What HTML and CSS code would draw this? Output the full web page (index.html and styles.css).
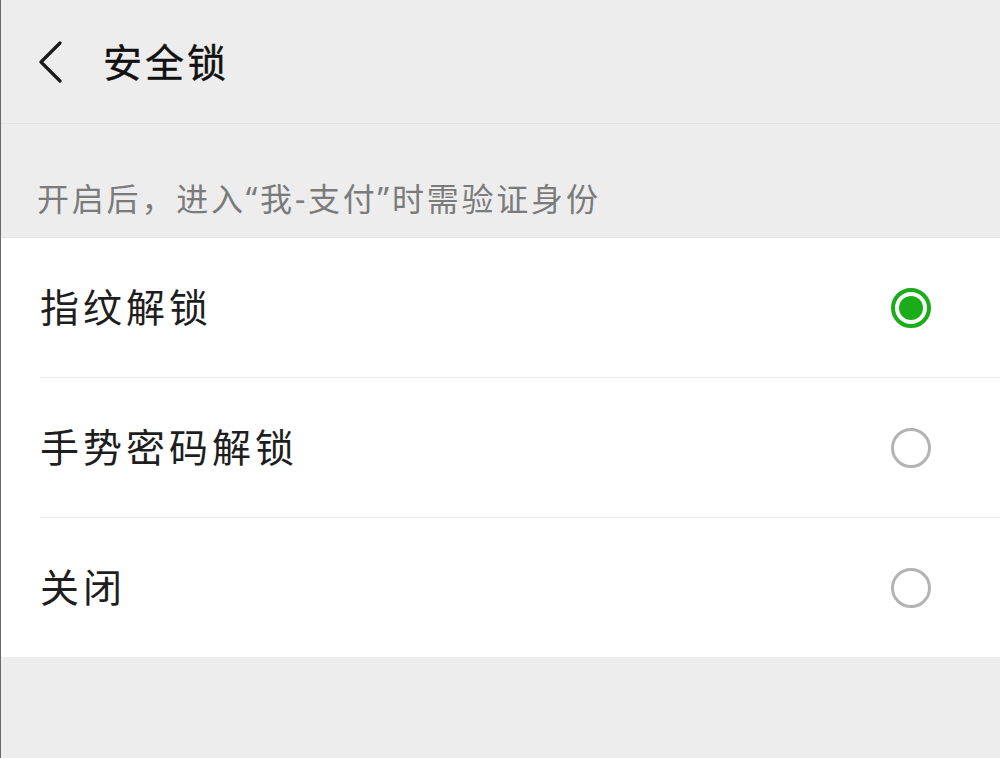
FILE: index.html
```html
<!DOCTYPE html>
<html lang="zh-CN">
<head>
<meta charset="utf-8">
<title>安全锁</title>
<link rel="stylesheet" href="styles.css">
</head>
<body>
<div class="frame">
  <header class="topbar">
    <span class="back" aria-label="返回">
      <svg width="26" height="42" viewBox="0 0 26 42"><path d="M23 2 L4 21 L23 40" fill="none" stroke="#1a1a1a" stroke-width="3.2" stroke-linecap="round" stroke-linejoin="round"/></svg>
    </span>
    <h1 class="title">安全锁</h1>
  </header>
  <div class="hint">开启后，进入“我-支付”时需验证身份</div>
  <ul class="options">
    <li class="option"><span class="label">指纹解锁</span><span class="radio checked"></span></li>
    <li class="option"><span class="label">手势密码解锁</span><span class="radio"></span></li>
    <li class="option"><span class="label">关闭</span><span class="radio"></span></li>
  </ul>
</div>
</body>
</html>
```
FILE: styles.css
```css
html, body {
  margin: 0;
  padding: 0;
  height: 100%;
}
body {
  background: #ededed;
  font-family: "Noto Sans", "Noto Sans CJK SC", sans-serif;
}
.frame {
  min-height: 758px;
  border-left: 1px solid #6a6a6a;
  box-sizing: border-box;
  background: #ededed;
}
.topbar {
  height: 123px;
  border-bottom: 1px solid #e3e3e3;
  display: flex;
  align-items: center;
  padding-left: 36px;
  background: #ededed;
}
.back {
  display: flex;
  width: 26px;
  height: 42px;
}
.title {
  margin: 0 0 0 40px;
  font-size: 39px;
  letter-spacing: 3px;
  font-weight: 400;
  color: #111;
  line-height: 1;
  -webkit-text-stroke: 0.4px #111;
}
.hint {
  height: 113px;
  box-sizing: border-box;
  padding: 55px 0 0 36px;
  font-size: 32px;
  letter-spacing: 2.8px;
  line-height: 40px;
  color: #7b7b7b;
}
.options {
  list-style: none;
  margin: 0;
  padding: 0 0 0 39px;
  background: #fff;
  border-top: 1px solid #e5e5e5;
}
.option {
  height: 139px;
  display: flex;
  align-items: center;
  justify-content: space-between;
  padding-right: 69px;
  border-bottom: 1px solid #ececec;
}
.option:last-child {
  border-bottom: none;
}
.label {
  font-size: 39px;
  letter-spacing: 4px;
  color: #1e1e1e;
  line-height: 1;
  margin-top: -2px;
}
.radio {
  width: 40px;
  height: 40px;
  box-sizing: border-box;
  border: 3px solid #b3b3b3;
  border-radius: 50%;
  position: relative;
}
.radio.checked {
  border: 4px solid #1aad19;
}
.radio.checked::after {
  content: "";
  position: absolute;
  left: 4px;
  top: 4px;
  width: 24px;
  height: 24px;
  border-radius: 50%;
  background: #1aad19;
}
```
